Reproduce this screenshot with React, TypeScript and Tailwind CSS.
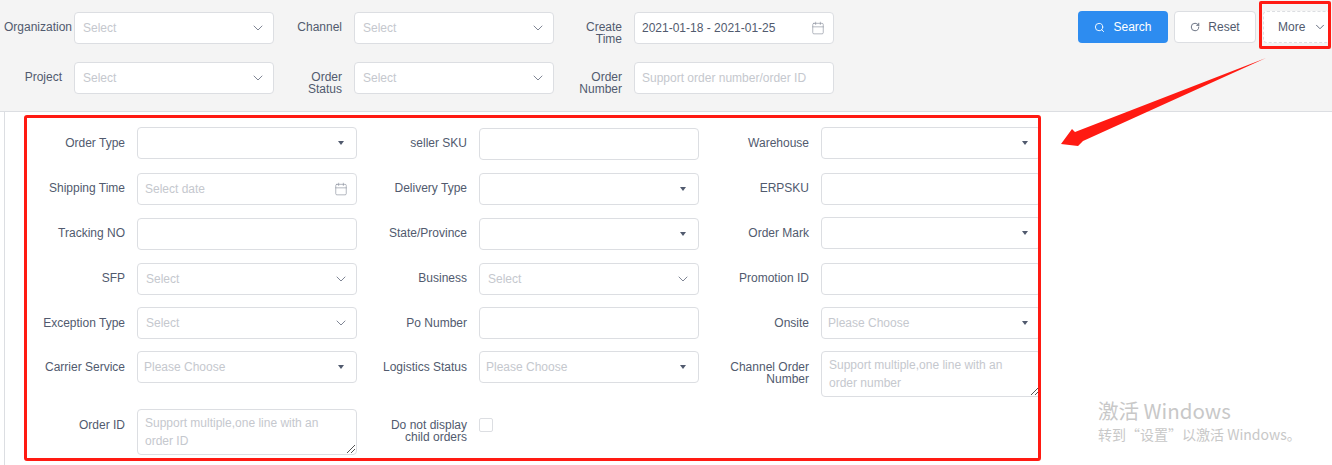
import React from "react";
import { ChevronDown, Search, RotateCw, Calendar } from "lucide-react";

const labelCls = "text-right text-[12px] leading-[12px] text-[#515a6e] shrink-0";
const boxCls = "h-8 rounded border border-[#dcdee2] bg-white text-[12px] flex items-center shrink-0";

function Chevron() {
  return <ChevronDown size={16} strokeWidth={1.5} className="text-[#808695] shrink-0" />;
}
function Caret() {
  return <span className="w-0 h-0 border-x-[3.5px] border-x-transparent border-t-[4px] border-t-[#515a6e] shrink-0" />;
}

function TopField({ label, w, children }: { label: React.ReactNode; w: string; children: React.ReactNode }) {
  return (
    <div className="flex items-start h-8">
      <div className={`${labelCls} ${w} pt-[9px]`}>{label}</div>
      {children}
    </div>
  );
}

function SelectBox({ wide }: { wide?: boolean }) {
  return (
    <div className={`${boxCls} ${wide ? "w-[220px]" : "w-[200px]"} pl-2 pr-[7px] justify-between`}>
      <span className="text-[#c5c8ce]">Select</span>
      <Chevron />
    </div>
  );
}
function CaretBox({ text }: { text?: string }) {
  return (
    <div className={`${boxCls} w-[220px] pl-[6px] pr-[12px] justify-between`}>
      <span className="text-[#c5c8ce]">{text ?? ""}</span>
      <Caret />
    </div>
  );
}
function Plain() {
  return <div className={`${boxCls} w-[220px]`} />;
}
function Area({ lines }: { lines: string[] }) {
  return (
    <div className="relative h-[46px] w-[220px] shrink-0 rounded border border-[#dcdee2] bg-white pl-[7px] pt-[4px] text-[12px] leading-[18px] text-[#c5c8ce]">
      {lines.map((l) => (
        <div key={l}>{l}</div>
      ))}
      <svg className="absolute right-0 bottom-0" width="11" height="11" viewBox="0 0 11 11" fill="none" stroke="#555" strokeWidth="1">
        <path d="M2 10 L10 2 M6 10 L10 6" />
      </svg>
    </div>
  );
}

function Field({ label, children, mt, high }: { label: React.ReactNode; children: React.ReactNode; mt: string; high?: boolean }) {
  return (
    <div className={`flex items-start ${mt}`}>
      <div className={`${labelCls} w-[120px] mr-3 ${high ? "pt-[9px]" : "pt-[10px]"}`}>{label}</div>
      {children}
    </div>
  );
}

export default function App() {
  return (
    <div className="relative w-[1332px] h-[465px] overflow-hidden bg-white font-['Liberation_Sans',Arial,sans-serif]">
      <div className="h-[112px] bg-[#f4f4f4] border-b border-[#dcdee2] pt-3 flex">
        <div className="flex flex-col gap-[18px] pl-[4px]">
          <div className="flex">
            <TopField label="Organization" w="w-[68px] mr-[2px]"><SelectBox /></TopField>
            <TopField label="Channel" w="w-[68px] mr-[12px]"><SelectBox /></TopField>
            <TopField label={<>Create<br />Time</>} w="w-[68px] mr-[12px]">
              <div className={`${boxCls} w-[200px] pl-[7px] pr-[8px] justify-between text-[#515a6e]`}>
                <span>2021-01-18 - 2021-01-25</span>
                <Calendar size={14} strokeWidth={1} className="text-[#808695]" />
              </div>
            </TopField>
          </div>
          <div className="flex">
            <TopField label="Project" w="w-[58px] mr-[12px]"><SelectBox /></TopField>
            <TopField label={<>Order<br />Status</>} w="w-[68px] mr-[12px]"><SelectBox /></TopField>
            <TopField label={<>Order<br />Number</>} w="w-[68px] mr-[12px]">
              <div className={`${boxCls} w-[200px] pl-[7px] text-[#c5c8ce]`}>Support order number/order ID</div>
            </TopField>
          </div>
        </div>
        <div className="ml-[244px] -mt-px flex items-start">
          <button className="h-8 w-[90px] rounded bg-[#2d8cf0] text-white text-[12px] flex items-center justify-center gap-[8px]">
            <Search size={11} strokeWidth={2} />
            Search
          </button>
          <button className="ml-[6px] h-8 w-[82px] rounded border border-[#dcdee2] bg-white text-[#515a6e] text-[12px] flex items-center justify-center gap-[8px]">
            <RotateCw size={10} strokeWidth={2} />
            Reset
          </button>
          <button className="ml-[7px] h-8 w-[68px] rounded border border-dashed border-[#dcdee2] bg-white text-[#515a6e] text-[12px] flex items-center pl-[14px] gap-[8px]">
            More
            <ChevronDown size={14} strokeWidth={1.5} />
          </button>
        </div>
      </div>

      <div className="h-[353px] ml-[4px] border-l border-[#dcdee2] flex pt-[15px]">
        <div className="flex flex-col w-[342px]">
          <Field label="Order Type" mt=""><CaretBox /></Field>
          <Field label="Shipping Time" mt="mt-[14px]" high>
            <div className={`${boxCls} w-[220px] pl-[7px] pr-[8px] justify-between text-[#c5c8ce]`}>
              <span>Select date</span>
              <Calendar size={14} strokeWidth={1} className="text-[#808695]" />
            </div>
          </Field>
          <Field label="Tracking NO" mt="mt-[13px]" high><Plain /></Field>
          <Field label="SFP" mt="mt-[13px]" high><SelectBox wide /></Field>
          <Field label="Exception Type" mt="mt-[12px]"><SelectBox wide /></Field>
          <Field label="Carrier Service" mt="mt-[12px]"><CaretBox text="Please Choose" /></Field>
          <Field label="Order ID" mt="mt-[26px]"><Area lines={["Support multiple,one line with an", "order ID"]} /></Field>
        </div>
        <div className="flex flex-col w-[342px] pt-px">
          <Field label="seller SKU" mt="" high><Plain /></Field>
          <Field label="Delivery Type" mt="mt-[13px]" high><CaretBox /></Field>
          <Field label="State/Province" mt="mt-[13px]" high><CaretBox /></Field>
          <Field label="Business" mt="mt-[13px]" high><SelectBox wide /></Field>
          <Field label="Po Number" mt="mt-[12px]"><Plain /></Field>
          <Field label="Logistics Status" mt="mt-[12px]"><CaretBox text="Please Choose" /></Field>
          <Field label={<>Do not display<br />child orders</>} mt="mt-[26px]">
            <div className="mt-[9px] w-[14px] h-[14px] rounded-[2px] border border-[#dcdee2] bg-white" />
          </Field>
        </div>
        <div className="flex flex-col w-[342px]">
          <Field label="Warehouse" mt=""><CaretBox /></Field>
          <Field label="ERPSKU" mt="mt-[14px]" high><Plain /></Field>
          <Field label="Order Mark" mt="mt-[12px]"><CaretBox /></Field>
          <Field label="Promotion ID" mt="mt-[14px]" high><Plain /></Field>
          <Field label="Onsite" mt="mt-[12px]"><CaretBox text="Please Choose" /></Field>
          <Field label={<>Channel Order<br />Number</>} mt="mt-[12px]">
            <Area lines={["Support multiple,one line with an", "order number"]} />
          </Field>
        </div>
      </div>

      {/* Annotations drawn over the screenshot */}
      <div className="absolute left-[24px] top-[115px] w-[1017px] h-[346px] border-[3px] border-[#ff1a12] rounded-[3px]" />
      <div className="absolute left-[1259px] top-[1px] w-[72px] h-[48px] border-[3px] border-[#ff1a12] rounded-[2px]" />
      <svg className="absolute left-[1055px] top-[50px]" width="220" height="100" viewBox="0 0 220 100">
        <polygon points="211,8 28,91 23,96 6,94 17,79 20,82" fill="#ff1a12" />
      </svg>
      <div className="absolute left-[1098px] top-[398px] text-[#c8c8c8] font-['Noto_Sans_CJK_SC','Noto_Sans',sans-serif]">
        <div className="text-[20.5px] leading-[24px]">激活 Windows</div>
        <div className="text-[14px] leading-[20px] mt-[2px]">转到“设置”以激活 Windows。</div>
      </div>
    </div>
  );
}
